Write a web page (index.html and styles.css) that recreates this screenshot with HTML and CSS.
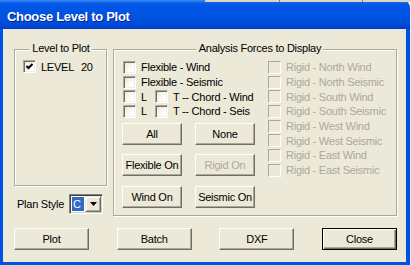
FILE: index.html
```html
<!DOCTYPE html>
<html lang="en">

<head>
    <meta charset="UTF-8">
    <title>Choose Level to Plot</title>
    <link rel="stylesheet" href="styles.css">
</head>

<body>
    <!-- dialog window -->
    <div class="window">
        <div class="title-bar">Choose Level to Plot</div>

        <div class="dialog">
            <div class="top-area">
                <!-- left column: level list + plan style -->
                <div class="left-col">
                    <div class="group level-group">
                        <div class="group-title">Level to Plot</div>
                        <div class="check-row level-row">
                            <span class="check">
                                <svg width="7" height="7" viewBox="0 0 7 7"><path d="M0.5 3 L2.5 5 L6.5 1" fill="none" stroke="#000" stroke-width="2"/></svg>
                            </span>
                            <span class="text">LEVEL</span>
                            <span class="level-num">20</span>
                        </div>
                    </div>

                    <div class="plan-style">
                        <span>Plan Style</span>
                        <div class="combo">
                            <span class="combo-value">C</span>
                            <span class="combo-btn">
                                <svg width="7" height="4" viewBox="0 0 7 4"><path d="M0 0 H7 L3.5 4 Z" fill="#000"/></svg>
                            </span>
                        </div>
                    </div>
                </div>

                <!-- right group: forces -->
                <div class="group forces-group">
                    <div class="group-title">Analysis Forces to Display</div>
                    <div class="forces-cols">
                        <div class="flex-col">
                            <div class="check-row"><span class="check"></span><span class="text">Flexible - Wind</span></div>
                            <div class="check-row"><span class="check"></span><span class="text">Flexible - Seismic</span></div>
                            <div class="check-row"><span class="check"></span><span class="text">L</span><span class="check second"></span><span class="text">T -- Chord - Wind</span></div>
                            <div class="check-row"><span class="check"></span><span class="text">L</span><span class="check second"></span><span class="text">T -- Chord - Seis</span></div>

                            <div class="btn-grid">
                                <button class="btn">All</button>
                                <button class="btn">None</button>
                                <button class="btn">Flexible On</button>
                                <button class="btn" disabled>Rigid On</button>
                                <button class="btn">Wind On</button>
                                <button class="btn">Seismic On</button>
                            </div>
                        </div>

                        <div class="rigid-col">
                            <div class="check-row disabled"><span class="check"></span><span class="text">Rigid - North Wind</span></div>
                            <div class="check-row disabled"><span class="check"></span><span class="text">Rigid - North Seismic</span></div>
                            <div class="check-row disabled"><span class="check"></span><span class="text">Rigid - South Wind</span></div>
                            <div class="check-row disabled"><span class="check"></span><span class="text">Rigid - South Seismic</span></div>
                            <div class="check-row disabled"><span class="check"></span><span class="text">Rigid - West Wind</span></div>
                            <div class="check-row disabled"><span class="check"></span><span class="text">Rigid - West Seismic</span></div>
                            <div class="check-row disabled"><span class="check"></span><span class="text">Rigid - East Wind</span></div>
                            <div class="check-row disabled"><span class="check"></span><span class="text">Rigid - East Seismic</span></div>
                        </div>
                    </div>
                </div>
            </div>

            <!-- bottom buttons -->
            <div class="actions">
                <button class="btn wide">Plot</button>
                <button class="btn wide">Batch</button>
                <button class="btn wide">DXF</button>
                <button class="btn wide default">Close</button>
            </div>
        </div>
    </div>

    <!-- edge of the window behind, over the title bar -->
    <div class="behind-strip"></div>
</body>

</html>
```

FILE: styles.css
```css
/* page */
body {
    margin: 0;
    width: 411px;
    height: 265px;
    overflow: hidden;
    position: relative;
    background-color: #ecebe6;
    font-family: "Liberation Sans", Arial, sans-serif;
    font-size: 11px;
    letter-spacing: -0.25px;
    color: #000;
}

/* window frame */
.window {
    width: 410px;
    height: 265px;
    display: flex;
    flex-direction: column;
}

.title-bar {
    height: 29px;
    box-sizing: border-box;
    padding: 5px 0 0 7px;
    line-height: 24px;
    font-size: 13px;
    font-weight: bold;
    letter-spacing: -0.3px;
    color: #fff;
    text-shadow: 1px 1px 0 #0a1e8f;
    border-top-right-radius: 8px;
    background: linear-gradient(to bottom, #3d8ffa 0, #0a5ce9 3px, #0056e7 6px, #0053e2 18px, #004ad8 25px, #003cc4 29px);
}

.dialog {
    flex: 1;
    display: flex;
    flex-direction: column;
    background-color: #ece9d8;
    border: solid #0053e1;
    border-width: 0 4px 3px 3px;
    padding: 20px 9px 0 11px;
}

.top-area {
    display: flex;
    gap: 6px;
    height: 167px;
}

/* group boxes (etched frame) */
.group {
    box-sizing: border-box;
    border: 1px solid #aca899;
    box-shadow: 1px 1px 0 #fff, inset 1px 1px 0 #fff;
}

.group-title {
    width: fit-content;
    margin: -8px auto 0;
    padding: 0 2px 0 3px;
    line-height: 13px;
    background-color: #ece9d8;
}

.left-col {
    width: 93px;
    display: flex;
    flex-direction: column;
}

.level-group {
    height: 137px;
    padding: 0 8px;
}

.level-row {
    margin-top: 5px;
}

.level-num {
    margin-left: 7px;
}

.forces-group {
    width: 284px;
    height: 167px;
    padding: 0 0 0 9px;
}

.forces-cols {
    display: flex;
    margin-top: 5px;
}

.flex-col {
    width: 145px;
}

/* checkbox rows */
.check-row {
    display: flex;
    align-items: center;
    height: 14.7px;
    white-space: nowrap;
}

.level-row {
    height: 13px;
}

.check {
    width: 13px;
    height: 13px;
    box-sizing: border-box;
    flex: none;
    display: flex;
    align-items: center;
    justify-content: center;
    border: 1px solid;
    border-color: #aca899 #fff #fff #aca899;
    box-shadow: inset 1px 1px 0 #716f64, inset -1px -1px 0 #f1efe2;
    background: linear-gradient(135deg, #e6e3d6, #fff 70%);
}

.check-row .text {
    margin-left: 5px;
}

.check.second {
    margin-left: 8px;
}

.disabled .check {
    box-shadow: none;
    background: #ece9d8;
}

.disabled .text {
    color: #aca899;
}

/* buttons */
.btn {
    appearance: none;
    margin: 0;
    padding: 0;
    width: 60px;
    height: 22px;
    font: inherit;
    letter-spacing: inherit;
    color: #000;
    background-color: #ece9d8;
    border: 1px solid;
    border-color: #fff #716f64 #716f64 #fff;
    box-shadow: inset -1px -1px 0 #aca899;
}

.btn:disabled {
    color: #aca899;
}

.btn-grid {
    display: grid;
    grid-template-columns: 60px 60px;
    grid-auto-rows: 22px;
    column-gap: 13px;
    row-gap: 9.5px;
    margin: 4px 0 0 -1px;
}

.actions {
    display: flex;
    justify-content: space-between;
    margin-top: 12px;
}

.btn.wide {
    width: 75px;
}

.btn.default {
    border-color: #000;
    box-shadow: inset 1px 1px 0 #fff, inset -1px -1px 0 #716f64, inset -2px -2px 0 #aca899;
}

/* plan style combo */
.plan-style {
    display: flex;
    align-items: center;
    gap: 5px;
    margin-top: 8px;
    padding-left: 3px;
}

.combo {
    display: flex;
    align-items: center;
    width: 34px;
    height: 20px;
    box-sizing: border-box;
    border: 1px solid;
    border-color: #808080 #fff #fff #808080;
    box-shadow: inset 1px 1px 0 #404040, inset -1px -1px 0 #d4d0c8;
    padding: 1px;
    background-color: #fff;
}

.combo-value {
    width: 12px;
    height: 14px;
    margin: 0 1px;
    line-height: 14px;
    padding-left: 1px;
    box-sizing: border-box;
    color: #fff;
    background-color: #316ac5;
}

.combo-btn {
    width: 16px;
    height: 16px;
    box-sizing: border-box;
    display: flex;
    align-items: center;
    justify-content: center;
    background-color: #ece9d8;
    border: 1px solid;
    border-color: #ece9d8 #716f64 #716f64 #ece9d8;
    box-shadow: inset 1px 1px 0 #fff, inset -1px -1px 0 #aca899;
}

/* bottom edge of another window, lying over the title bar */
.behind-strip {
    position: absolute;
    top: 0;
    left: 205px;
    width: 206px;
    height: 2px;
    background: linear-gradient(to right, #d8d5c8 74px, #808080 74px, #808080 75px, #d8d5c8 75px, #d8d5c8 157px, #808080 157px, #808080 158px, #d8d5c8 158px);
}
```
